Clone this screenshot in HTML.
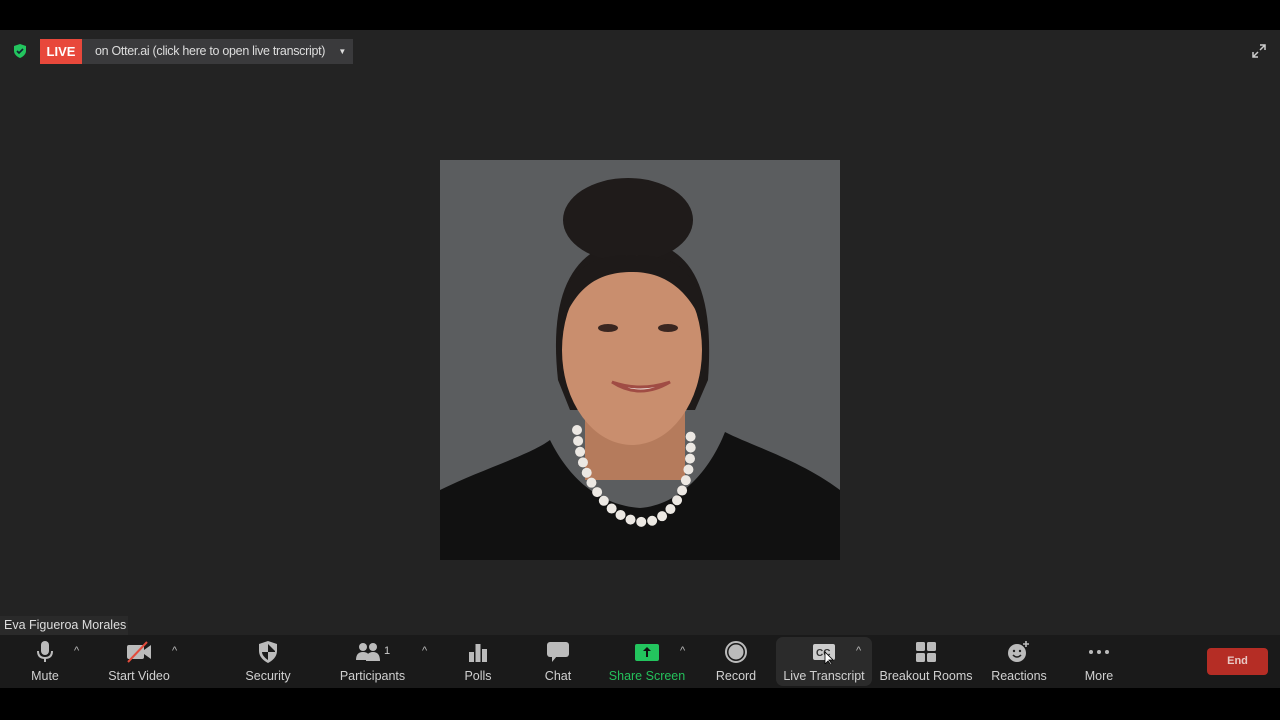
<!DOCTYPE html>
<html><head><meta charset="utf-8"><style>
*{margin:0;padding:0;box-sizing:border-box}
body{width:1280px;height:720px;background:#000;font-family:"Liberation Sans",sans-serif;position:relative;overflow:hidden}
.main{position:absolute;left:0;top:30px;width:1280px;height:605px;background:#232323}
.tb{position:absolute;left:0;top:635px;width:1280px;height:53px;background:#1a1a1a}
.btn{position:absolute;top:0;height:53px;text-align:center;color:#d0d0d0;font-size:12.5px}
.btn .lbl{position:absolute;top:34px;left:0;right:0;white-space:nowrap}
.btn svg{position:absolute;top:5px;left:50%;transform:translateX(-50%)}
.car{position:absolute;top:10px;color:#bbb;font-size:11px}
</style></head><body>
<div class="main"></div>
<svg style="position:absolute;left:12px;top:43px" width="16" height="16" viewBox="0 0 16 16"><path d="M8 1L14 3V8C14 11 11 14 8 15C5 14 2 11 2 8V3Z" fill="#23c55e"/><path d="M5 8L7 10L11 6" stroke="#123" stroke-width="1.6" fill="none"/></svg>
<div style="position:absolute;left:40px;top:39px;width:42px;height:25px;background:#e8483b;color:#fff;font-weight:bold;font-size:13px;line-height:25px;text-align:center">LIVE</div>
<div style="position:absolute;left:82px;top:39px;width:271px;height:25px;background:#3a3a3c;color:#ddd;font-size:12.5px;line-height:25px;padding-left:13px;letter-spacing:-0.3px;white-space:nowrap">on Otter.ai (click here to open live transcript)<span style="position:absolute;right:7px;font-size:8px">▼</span></div>
<svg style="position:absolute;left:1251px;top:43px" width="16" height="16" viewBox="0 0 16 16" stroke="#ccc" stroke-width="1.5" fill="none"><path d="M9 2H14V7M14 2L9 7M7 14H2V9M2 14L7 9"/></svg>
<svg style="position:absolute;left:440px;top:160px" width="400" height="400" viewBox="0 0 400 400">
<rect width="400" height="400" fill="#5b5d5f"/>
<path d="M118 220C108 130 135 85 190 80C250 80 275 125 268 220L255 250L130 250Z" fill="#1e1a19"/>
<ellipse cx="188" cy="60" rx="65" ry="42" fill="#1f1b1a"/>
<rect x="145" y="240" width="100" height="80" fill="#b57b5c"/>
<ellipse cx="192" cy="190" rx="70" ry="95" fill="#c98e6e"/>
<path d="M120 170C120 110 150 95 192 95C235 95 262 110 265 170C250 130 225 112 192 112C160 112 135 125 120 170Z" fill="#1e1a19"/>
<ellipse cx="168" cy="168" rx="10" ry="4" fill="#3a2620"/><ellipse cx="228" cy="168" rx="10" ry="4" fill="#3a2620"/>
<path d="M172 222Q200 240 230 222Q200 232 172 222Z" fill="#f1e6df" stroke="#a04c44" stroke-width="3"/>
<path d="M0 400V330C40 310 90 295 110 280C130 320 160 345 200 348C240 345 270 310 285 272C310 285 360 300 400 330V400Z" fill="#111"/>
<path d="M137 270C140 320 170 362 205 362C235 360 255 320 250 268" stroke="#ece8e3" stroke-width="10" fill="none" stroke-dasharray="0 11" stroke-linecap="round"/>
</svg>
<div style="position:absolute;left:0;top:616px;width:128px;height:19px;background:#2a2a2a;color:#ddd;font-size:12.5px;line-height:19px;padding-left:4px">Eva Figueroa Morales</div>
<div class="tb">
<div class="btn" style="left:20px;width:50px"><svg width="24" height="24" viewBox="0 0 24 24" fill="#bbb"><rect x="8" y="1" width="8" height="14" rx="4"/><path d="M5 11Q5 18 12 18Q19 18 19 11" stroke="#bbb" stroke-width="2" fill="none"/><rect x="11" y="18" width="2" height="4"/></svg><div class="lbl">Mute</div></div>
<span class="car" style="left:74px">^</span>
<div class="btn" style="left:100px;width:78px"><svg width="28" height="24" viewBox="0 0 28 24"><rect x="2" y="5" width="17" height="14" rx="2" fill="#bbb"/><path d="M19 10L26 5V19L19 14Z" fill="#bbb"/><path d="M3 22L22 2" stroke="#e24b3b" stroke-width="2"/></svg><div class="lbl">Start Video</div></div>
<span class="car" style="left:172px">^</span>
<div class="btn" style="left:238px;width:60px"><svg width="22" height="24" viewBox="0 0 22 24"><path d="M11 1L20 4V11C20 17 15 21 11 23C7 21 2 17 2 11V4Z" fill="#bbb"/><path d="M11 4V12H18V11L11 4M11 12V20C8 18 5 15 5 12Z" fill="#1a1a1a"/></svg><div class="lbl">Security</div></div>
<div class="btn" style="left:335px;width:75px"><svg width="38" height="24" viewBox="0 0 38 24" fill="#bbb"><circle cx="9" cy="7" r="4"/><path d="M2 20Q2 12 9 12Q16 12 16 20Z"/><circle cx="19" cy="7" r="4"/><path d="M12 21Q12 12 19 12Q26 12 26 21Z"/><text x="30" y="14" font-size="11" fill="#ccc" font-family="Liberation Sans">1</text></svg><div class="lbl">Participants</div></div>
<span class="car" style="left:422px">^</span>
<div class="btn" style="left:458px;width:40px"><svg width="22" height="24" viewBox="0 0 22 24" fill="#bbb"><rect x="2" y="12" width="5" height="10"/><rect x="8.5" y="4" width="5" height="18"/><rect x="15" y="9" width="5" height="13"/></svg><div class="lbl">Polls</div></div>
<div class="btn" style="left:538px;width:40px"><svg width="24" height="24" viewBox="0 0 24 24" fill="#bbb"><rect x="1" y="2" width="22" height="15" rx="3"/><path d="M6 16V22L11 16Z"/></svg><div class="lbl">Chat</div></div>
<div class="btn" style="left:608px;width:78px;color:#24c05b"><svg width="26" height="24" viewBox="0 0 26 24"><rect x="1" y="4" width="24" height="17" rx="2" fill="#23c55e"/><path d="M13 7L9 11H12V17H14V11H17Z" fill="#111"/></svg><div class="lbl">Share Screen</div></div>
<span class="car" style="left:680px">^</span>
<div class="btn" style="left:712px;width:48px"><svg width="24" height="24" viewBox="0 0 24 24"><circle cx="12" cy="12" r="10" fill="none" stroke="#bbb" stroke-width="2"/><circle cx="12" cy="12" r="7.5" fill="#bbb"/></svg><div class="lbl">Record</div></div>
<div style="position:absolute;left:776px;top:2px;width:96px;height:49px;background:#2b2b2b;border-radius:7px"></div>
<div class="btn" style="left:780px;width:88px"><svg width="24" height="24" viewBox="0 0 24 24"><rect x="1" y="4" width="22" height="16" rx="2" fill="#ccc"/><text x="4" y="16" font-size="10" fill="#333" font-family="Liberation Sans" font-weight="bold">CC</text><path d="M13 12V24L16 21L19 25L20 24L17 20H21Z" fill="#fff" stroke="#000" stroke-width=".8"/></svg><div class="lbl">Live Transcript</div></div>
<span class="car" style="left:856px">^</span>
<div class="btn" style="left:878px;width:96px"><svg width="24" height="24" viewBox="0 0 24 24" fill="#bbb"><rect x="2" y="2" width="9" height="9" rx="1.5"/><rect x="13" y="2" width="9" height="9" rx="1.5"/><rect x="2" y="13" width="9" height="9" rx="1.5"/><rect x="13" y="13" width="9" height="9" rx="1.5"/></svg><div class="lbl">Breakout Rooms</div></div>
<div class="btn" style="left:988px;width:62px"><svg width="26" height="24" viewBox="0 0 26 24"><circle cx="11" cy="13" r="9" fill="#bbb"/><circle cx="8" cy="11" r="1.2" fill="#222"/><circle cx="14" cy="11" r="1.2" fill="#222"/><path d="M7 15Q11 19 15 15" stroke="#222" stroke-width="1.5" fill="none"/><path d="M20 1V7M17 4H23" stroke="#bbb" stroke-width="1.6"/></svg><div class="lbl">Reactions</div></div>
<div class="btn" style="left:1078px;width:42px"><svg width="24" height="24" viewBox="0 0 24 24" fill="#bbb"><circle cx="4" cy="12" r="2"/><circle cx="12" cy="12" r="2"/><circle cx="20" cy="12" r="2"/></svg><div class="lbl">More</div></div>
<div style="position:absolute;left:1207px;top:13px;width:61px;height:27px;background:#b52d25;border-radius:4px;color:#e8c8c4;font-size:11px;font-weight:bold;line-height:27px;text-align:center">End</div>
</div>
</body></html>
